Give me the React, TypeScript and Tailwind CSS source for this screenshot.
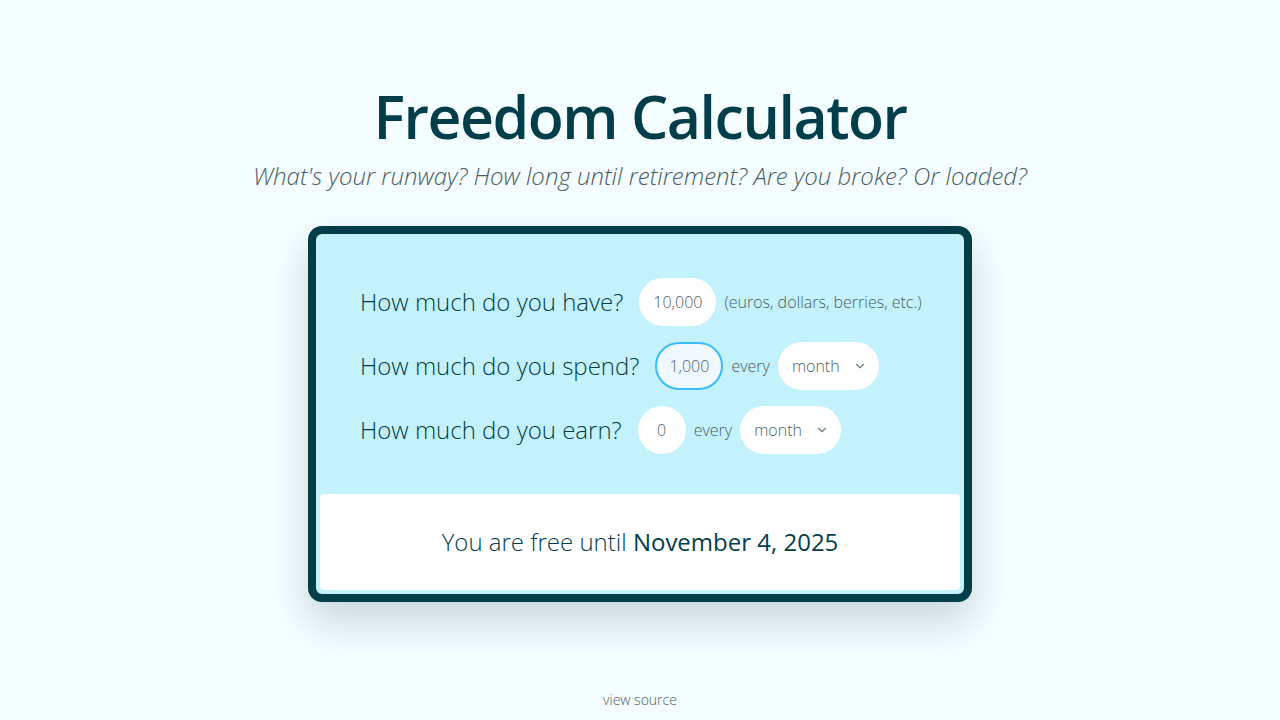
import React, { useState } from 'react';
import { ChevronDown } from 'lucide-react';

const font = { fontFamily: '"Open Sans", "Noto Sans", sans-serif' };

function Pill({ value, width, focused }: { value: string; width: string; focused?: boolean }) {
  return (
    <div
      className={`h-12 ${width} flex items-center justify-center rounded-full text-base font-light text-[#4b5f66] ${
        focused ? 'bg-[#f0f9ff] border-2 border-[#38bdf8]' : 'bg-white'
      }`}
    >
      {value}
    </div>
  );
}

function Period({ value }: { value: string }) {
  return (
    <div className="h-12 w-[101px] flex items-center justify-between rounded-full bg-white pl-[14px] pr-3 text-base font-light text-[#4b5f66]">
      <span>{value}</span>
      <ChevronDown className="w-3.5 h-3.5 text-[#6b7f86]" strokeWidth={2} />
    </div>
  );
}

export default function App() {
  const [have] = useState('10,000');
  const [spend] = useState('1,000');
  const [earn] = useState('0');

  return (
    <div style={font} className="min-h-screen w-full bg-[#f4fdff] flex flex-col items-center text-[#023e4a]">
      <h1 className="mt-[78px] text-[59px] leading-[76px] font-semibold tracking-tight">Freedom Calculator</h1>
      <p className="mt-[6px] text-[24px] leading-8 font-light italic text-[#4a5e64]">
        What's your runway? How long until retirement? Are you broke? Or loaded?
      </p>

      <div className="mt-[34px] w-[664px] rounded-[14px] border-8 border-[#023e4a] bg-[#c3f2fd] shadow-[0_20px_40px_rgba(0,40,50,0.18)]">
        <div className="flex flex-col gap-4 pl-11 pr-6 pt-11 pb-10">
          <div className="flex items-center">
            <span className="text-[24px] font-light mr-4">How much do you have?</span>
            <Pill value={have} width="w-[77px]" />
            <span className="ml-2 text-base font-light text-[#4b5f66]">(euros, dollars, berries, etc.)</span>
          </div>
          <div className="flex items-center">
            <span className="text-[24px] font-light mr-4">How much do you spend?</span>
            <Pill value={spend} width="w-[68px]" focused />
            <span className="mx-2 text-base font-light text-[#4b5f66]">every</span>
            <Period value="month" />
          </div>
          <div className="flex items-center">
            <span className="text-[24px] font-light mr-4">How much do you earn?</span>
            <Pill value={earn} width="w-12" />
            <span className="mx-2 text-base font-light text-[#4b5f66]">every</span>
            <Period value="month" />
          </div>
        </div>
        <div className="mx-1 mb-1 h-24 rounded-[4px] bg-white flex items-center justify-center text-[24px] font-light">
          <span>
            You are free until <span className="font-medium">November 4, 2025</span>
          </span>
        </div>
      </div>

      <div className="mt-auto mb-[10px] text-sm font-light text-[#4a5e64]">view source</div>
    </div>
  );
}
